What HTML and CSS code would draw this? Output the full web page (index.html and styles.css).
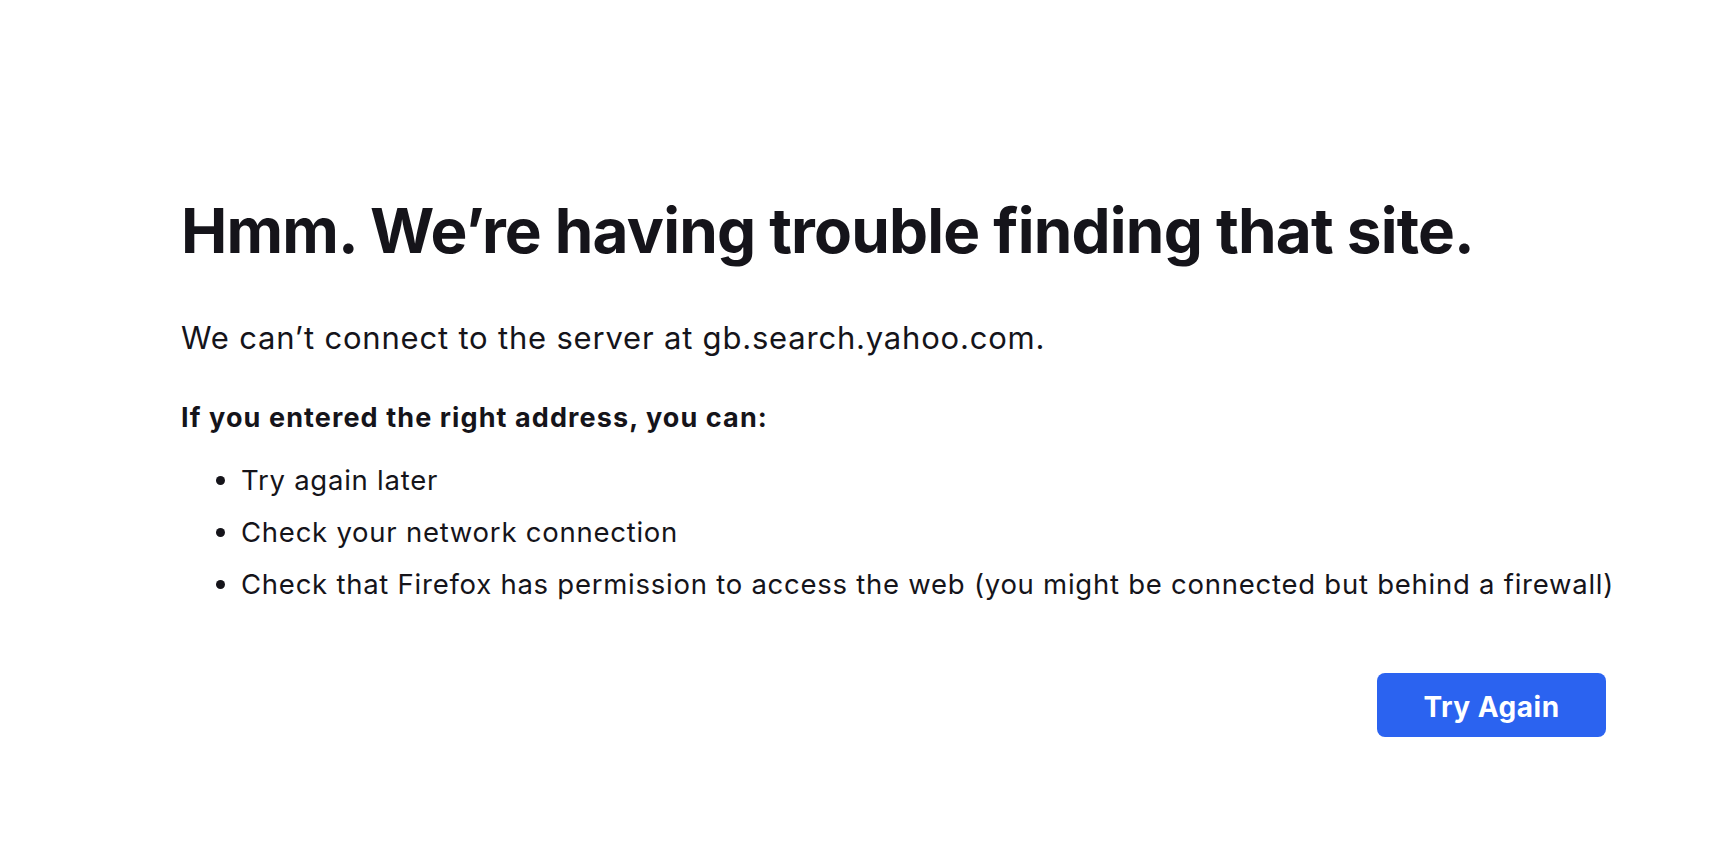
FILE: index.html
```html
<!DOCTYPE html>
<html lang="en">
<head>
<meta charset="utf-8">
<title>Problem loading page</title>
<link rel="stylesheet" href="styles.css">
</head>
<body>
<main class="container">
  <h1 class="title">Hmm. We’re having trouble finding that site.</h1>
  <p class="intro">We can’t connect to the server at gb.search.yahoo.com.</p>
  <p class="lead">If you entered the right address, you can:</p>
  <ul class="tips">
    <li>Try again later</li>
    <li>Check your network connection</li>
    <li>Check that Firefox has permission to access the web (you might be connected but behind a firewall)</li>
  </ul>
  <div class="actions">
    <button class="primary" type="button">Try Again</button>
  </div>
</main>
</body>
</html>
```

FILE: styles.css
```css
html, body {
  margin: 0;
  padding: 0;
  background: #ffffff;
}
body {
  font-family: Inter, "Noto Sans", sans-serif;
  color: #15141a;
}
.container {
  margin-left: 181px;
  width: 1425px;
  padding-top: 194px;
}
.title {
  margin: 0;
  font-size: 62px;
  line-height: 74px;
  font-weight: 700;
  letter-spacing: -0.8px;
}
.intro {
  margin: 50px 0 0;
  font-size: 31px;
  line-height: 40px;
  font-weight: 400;
  letter-spacing: 0.8px;
}
.lead {
  margin: 44px 0 0;
  font-size: 27px;
  line-height: 32px;
  font-weight: 700;
  letter-spacing: 1.1px;
}
.tips {
  margin: 20px 0 0;
  padding-left: 60px;
  font-size: 27.5px;
  line-height: 52px;
  letter-spacing: 0.75px;
  white-space: nowrap;
}
.actions {
  display: flex;
  justify-content: flex-end;
  margin-top: 63px;
}
.primary {
  width: 229px;
  height: 64px;
  padding: 3px 0 0;
  border: none;
  border-radius: 8px;
  background: #2b63f0;
  color: #ffffff;
  font-family: Inter, "Noto Sans", sans-serif;
  font-size: 28px;
  font-weight: 700;
  letter-spacing: 0.5px;
}
```
